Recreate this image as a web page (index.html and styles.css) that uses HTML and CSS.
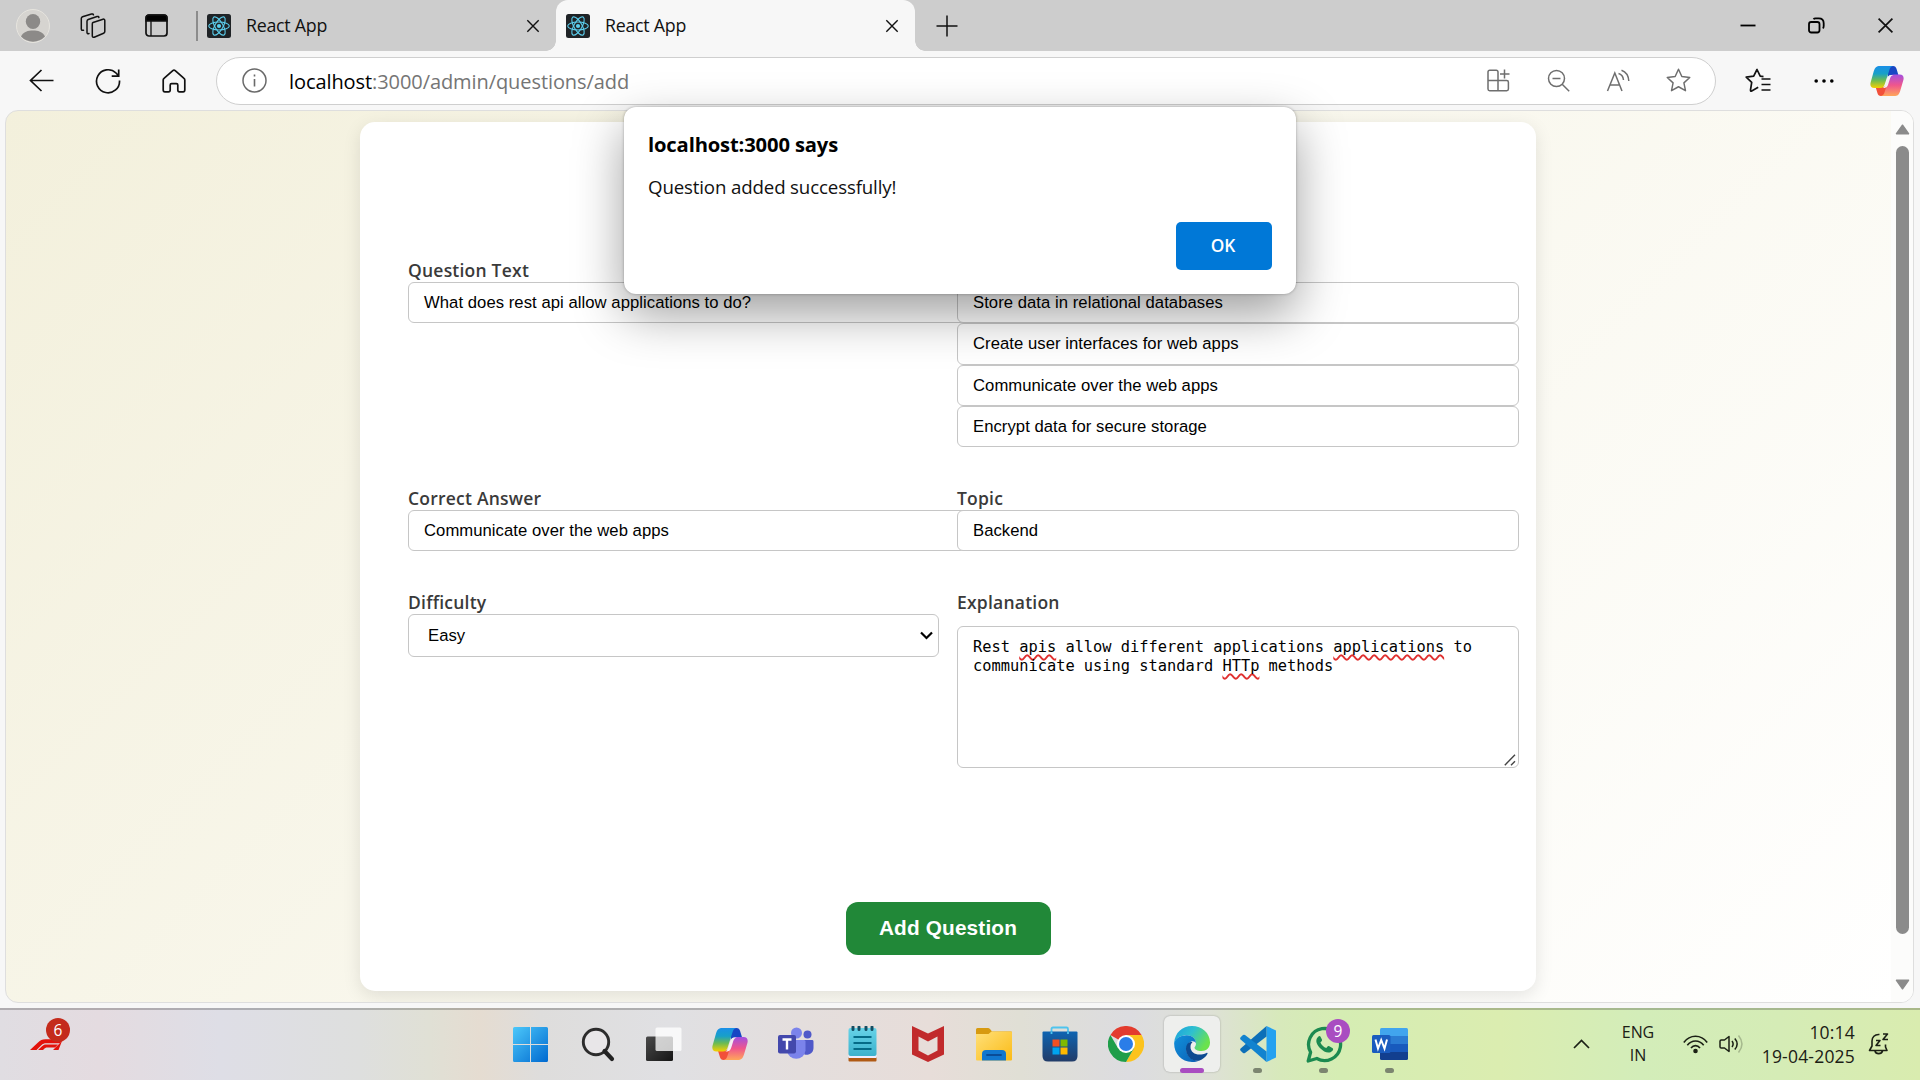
FILE: index.html
```html
<!DOCTYPE html>
<html lang="en">
<head>
<meta charset="utf-8">
<title>React App</title>
<link rel="stylesheet" href="styles.css">
</head>
<body>
<svg class="defs" width="0" height="0" aria-hidden="true">
  <defs>
    <linearGradient id="cpA" x1="0" y1="0" x2="0" y2="1"><stop offset="0" stop-color="#1a8fe8"/><stop offset=".35" stop-color="#18a0c8"/><stop offset=".65" stop-color="#6cbb52"/><stop offset="1" stop-color="#f7d000"/></linearGradient>
    <linearGradient id="cpB" x1="0" y1="0" x2="0" y2="1"><stop offset="0" stop-color="#a34fe0"/><stop offset=".5" stop-color="#f0568c"/><stop offset="1" stop-color="#ffa75a"/></linearGradient>
    <linearGradient id="win" x1="0" y1="0" x2="1" y2="1"><stop offset="0" stop-color="#4cc8fa"/><stop offset="1" stop-color="#0069d0"/></linearGradient>
    <linearGradient id="fold" x1="0" y1="0" x2="1" y2="1"><stop offset="0" stop-color="#ffe07a"/><stop offset="1" stop-color="#fbbb16"/></linearGradient>
    <linearGradient id="store" x1="0" y1="0" x2="0" y2="1"><stop offset="0" stop-color="#0e64b2"/><stop offset="1" stop-color="#223c68"/></linearGradient>
    <linearGradient id="edgeTop" x1="0" y1="0" x2="1" y2=".5"><stop offset="0" stop-color="#1a9fe0"/><stop offset=".5" stop-color="#2fc0cf"/><stop offset="1" stop-color="#6ae24d"/></linearGradient>
    <linearGradient id="edgeLow" x1="0" y1="0" x2="1" y2="1"><stop offset="0" stop-color="#1191dc"/><stop offset="1" stop-color="#0b5fb4"/></linearGradient>
    <linearGradient id="note" x1="0" y1="0" x2="0" y2="1"><stop offset="0" stop-color="#67d3e8"/><stop offset="1" stop-color="#3cb2cd"/></linearGradient>
    <linearGradient id="task" x1="0" y1="0" x2="1" y2="1"><stop offset="0" stop-color="#4a4a4a"/><stop offset="1" stop-color="#151515"/></linearGradient>
    <symbol id="react" viewBox="0 0 24 24">
      <rect width="24" height="24" rx="2.5" fill="#1f2326"/>
      <g fill="none" stroke="#5ccfee" stroke-width="1.1"><ellipse cx="12" cy="12" rx="10.3" ry="4"/><ellipse cx="12" cy="12" rx="10.3" ry="4" transform="rotate(60 12 12)"/><ellipse cx="12" cy="12" rx="10.3" ry="4" transform="rotate(120 12 12)"/></g>
      <circle cx="12" cy="12" r="2.1" fill="#5ccfee"/>
    </symbol>
    <symbol id="copilot" viewBox="0 0 36 34">
      <path d="M19 1h5.500c2 0 3 1.200 3.600 3l2 6.500H23c-2.500 0-3.500 1-4.200 3z" fill="#1846c4"/>
      <path d="M17 33h-5.500c-2 0-3-1.200-3.600-3l-2-6.500H13c2.500 0 3.500-1 4.200-3z" fill="#f2503a"/>
      <path d="M10.500 1h14c-2.300.5-3.200 1.800-3.900 4l-4.800 15c-.9 2.900-2 4.500-5 4.500H4.500C1 24.500-.3 22 .6 18.500L4 6.500C5.200 2.700 6.700 1 10.500 1z" fill="url(#cpA)"/>
      <path d="M25.500 33h-14c2.300-.5 3.200-1.800 3.900-4l4.800-15c.9-2.900 2-4 5-4h6.300c3.500 0 4.800 2.500 3.900 6L32 27.500c-1.200 3.800-2.700 5.500-6.500 5.500z" fill="url(#cpB)"/>
      <path d="M22.500 10.500h2.300c-2 .5-2.800 1.500-3.500 3.500l-2 6.500c-.7 2.300-1.800 3.600-4 4h-2c1.800-.6 2.300-1.700 3-3.800l2.200-6.700c.7-2 1.500-3.500 4-3.500z" fill="#f4f0f2"/>
    </symbol>
    <symbol id="close" viewBox="0 0 16 16"><path d="M1.500 1.500l13 13M14.500 1.500l-13 13" fill="none" stroke="#111" stroke-width="1.600"/></symbol>
    <symbol id="star" viewBox="0 0 24 24"><path d="M12 1.200l3.200 7 7.600.9-5.600 5.200 1.500 7.500-6.700-3.800-6.700 3.800 1.500-7.500L1.200 9.100l7.600-.9z" fill="none" stroke="#6e6e6e" stroke-width="1.400" stroke-linejoin="round"/></symbol>
  </defs>
</svg>

<header class="tabstrip">
  <div class="slot profile"><svg width="34" height="34" viewBox="0 0 34 34"><circle cx="17" cy="17" r="16.500" fill="#d6d4d0" stroke="#e6e4de"/><ellipse cx="17" cy="12.500" rx="7.200" ry="7.500" fill="#8c8a88"/><path d="M5 27.500c2.500-5 7-6 12-6s9.500 1 12 6a16.500 16.500 0 0 1-24 0z" fill="#8c8a88"/></svg></div>
  <div class="slot workspaces"><svg width="26" height="26" viewBox="0 0 26 26" fill="none" stroke="#111" stroke-width="1.500" stroke-linejoin="round" stroke-linecap="round"><path d="M13 9.500L23 6.200c1-.3 1.800.2 1.800 1.200v11.100c0 .8-.4 1.400-1.200 1.700l-9.400 4c-1 .4-1.900 0-1.900-1.100V10.900c0-.8 0-1.100.7-1.400z"/><path d="M9 20.500c-1.200.5-2 0-2-1.100V8.200c0-.8.400-1.400 1.200-1.700L17 3.500c1-.3 1.700 0 1.900 1"/><path d="M3.500 17.200c-1.400.4-2.200 0-2.200-1.100V5.400c0-.8.400-1.400 1.200-1.700L11.500 1c1-.3 1.700 0 1.900.8"/></svg></div>
  <div class="slot tab-actions"><svg width="23" height="23" viewBox="0 0 23 23"><rect x="1" y="1" width="21" height="21" rx="3" fill="none" stroke="#111" stroke-width="1.700"/><path d="M1 7V4a3 3 0 0 1 3-3h15a3 3 0 0 1 3 3v3zM6 7v15" fill="#000" stroke="#111" stroke-width="1.300"/></svg></div>
  <div class="divider"></div>
  <div class="tab"><svg width="24" height="24"><use href="#react"/></svg><span class="tab-title">React App</span><svg class="tab-close" width="14" height="14"><use href="#close"/></svg></div>
  <div class="tab active"><svg width="24" height="24"><use href="#react"/></svg><span class="tab-title">React App</span><svg class="tab-close" width="14" height="14"><use href="#close"/></svg></div>
  <div class="slot new-tab"><svg width="22" height="22" viewBox="0 0 22 22"><path d="M11 .5v21M.5 11h21" stroke="#111" stroke-width="1.500"/></svg></div>
  <div class="window-controls">
    <div class="slot"><svg width="16" height="16" viewBox="0 0 16 16"><path d="M.5 7.500h15" stroke="#000" stroke-width="1.800"/></svg></div>
    <div class="slot"><svg width="17" height="17" viewBox="0 0 17 17" fill="none" stroke="#000" stroke-width="1.800"><rect x="1" y="5" width="10.500" height="10.500" rx="2.200"/><path d="M5.500 2.200C6 1.500 6.500 1.300 7.500 1.300h3.200c3 0 5 2 5 5V9c0 1-.2 1.800-1 2.200" /></svg></div>
    <div class="slot"><svg width="17" height="17"><use href="#close"/></svg></div>
  </div>
</header>

<nav class="toolbar">
  <div class="slot back"><svg width="25" height="23" viewBox="0 0 25 23" fill="none" stroke="#111" stroke-width="1.700"><path d="M24.500 11.500H1.500M12.500 1L1.500 11.500l11 10.500"/></svg></div>
  <div class="slot"><svg width="26" height="26" viewBox="0 0 26 26" fill="none" stroke="#111" stroke-width="1.700"><path d="M24.500 12.500A11.500 11.500 0 1 1 21 5l2.500 2.800M23.700 1.500v6.700h-7"/></svg></div>
  <div class="slot"><svg width="24" height="24" viewBox="0 0 24 24" fill="none" stroke="#111" stroke-width="1.700" stroke-linejoin="round"><path d="M10.800 1.700L2 9.400c-.6.500-.8 1-.8 1.700v10c0 1 .7 1.700 1.700 1.700h3.600c1 0 1.700-.7 1.700-1.700v-5c0-.9.500-1.400 1.400-1.400h4.800c.9 0 1.400.5 1.400 1.400v5c0 1 .7 1.700 1.700 1.700h3.600c1 0 1.700-.7 1.700-1.700v-10c0-.7-.2-1.200-.8-1.700l-8.800-7.700c-.8-.7-1.600-.7-2.400 0z"/></svg></div>
  <div class="address">
    <svg class="info" width="25" height="25" viewBox="0 0 25 25"><circle cx="12.500" cy="12.500" r="11.500" fill="none" stroke="#6a6a6a" stroke-width="1.500"/><path d="M12.500 11v7.500M12.500 6.500v2" stroke="#6a6a6a" stroke-width="1.600"/></svg>
    <span class="url"><b>localhost</b>:3000/admin/questions/add</span>
    <div class="address-actions">
      <div class="slot"><svg width="23" height="23" viewBox="0 0 23 23" fill="none" stroke="#6e6e6e" stroke-width="1.500"><path d="M11 11.500V3c0-1-.7-1.700-1.700-1.700H2.700C1.700 1.300 1 2 1 3v17c0 1 .7 1.700 1.700 1.700h17c1 0 1.700-.7 1.700-1.700v-6.800c0-1-.7-1.700-1.700-1.700H1M11 11.500v10M17.500.5v9M13 5h9.500"/></svg></div>
      <div class="slot"><svg width="23" height="23" viewBox="0 0 23 23" fill="none" stroke="#6e6e6e" stroke-width="1.500"><circle cx="9.500" cy="9.500" r="8"/><path d="M15.200 15.200l7 7M5.500 9.500h8"/></svg></div>
      <div class="slot"><svg width="24" height="24" viewBox="0 0 24 24" fill="none" stroke="#6e6e6e" stroke-width="1.500"><path d="M1.500 22L8.800 4l7.200 18M4 16h9.500M12.500 4.500c3 .7 4.700 3 5 6.500M15.500 1.200c4.500 1.600 7 5.300 7.300 10.800"/></svg></div>
      <div class="slot"><svg width="25" height="25"><use href="#star"/></svg></div>
    </div>
  </div>
  <div class="toolbar-right">
    <div class="slot"><svg width="26" height="25" viewBox="0 0 26 25" fill="none" stroke="#111" stroke-width="1.700" stroke-linejoin="round"><path d="M18.500 8.700l-3.300-.5L12 1.500 8.700 8.200 1.200 9.200l5.500 5.200L5.500 22c-.1 1 .3 1.300 1.200.9l6.500-3.600M16.500 11h9M16.500 16.500h9M16.500 22h9"/></svg></div>
    <div class="slot"><svg width="20" height="6" viewBox="0 0 20 6"><circle cx="2.200" cy="3" r="1.800"/><circle cx="10" cy="3" r="1.800"/><circle cx="17.800" cy="3" r="1.800"/></svg></div>
    <div class="slot copilot"><svg width="34" height="32"><use href="#copilot"/></svg></div>
  </div>
</nav>

<div class="frame">
  <main class="page">
    <form class="card">
      <div class="field">
        <label>Question Text</label>
        <div class="input">What does rest api allow applications to do?</div>
      </div>
      <div class="field options">
        <div class="input">Store data in relational databases</div>
        <div class="input">Create user interfaces for web apps</div>
        <div class="input">Communicate over the web apps</div>
        <div class="input">Encrypt data for secure storage</div>
      </div>
      <div class="field">
        <label>Correct Answer</label>
        <div class="input">Communicate over the web apps</div>
      </div>
      <div class="field">
        <label>Topic</label>
        <div class="input">Backend</div>
      </div>
      <div class="field">
        <label>Difficulty</label>
        <div class="input select">Easy<svg width="13" height="9" viewBox="0 0 13 9"><path d="M1 1.500l5.500 5.500L12 1.500" fill="none" stroke="#000" stroke-width="2.200"/></svg></div>
      </div>
      <div class="field">
        <label>Explanation</label>
        <div class="textarea"><p>Rest <u>apis</u> allow different applications <u>applications</u> to<br>communicate using standard <u>HTTp</u> methods</p><svg width="12" height="12" viewBox="0 0 12 12"><path d="M.8 11.200L11 .8M7 11.200l4-4" stroke="#444" stroke-width="1.400"/></svg></div>
      </div>
      <button class="submit" type="button">Add Question</button>
    </form>
    <div class="scrollbar">
      <svg width="15" height="11" viewBox="0 0 15 11"><path d="M7.500 1.200L13.500 9.800h-12z" fill="#8b8b8b" stroke="#8b8b8b" stroke-width="1.500" stroke-linejoin="round"/></svg>
      <div class="thumb"></div>
      <svg width="15" height="11" viewBox="0 0 15 11"><path d="M7.500 9.800L13.500 1.200h-12z" fill="#8b8b8b" stroke="#8b8b8b" stroke-width="1.500" stroke-linejoin="round"/></svg>
    </div>
  </main>
</div>

<section class="dialog">
  <h1>localhost:3000 says</h1>
  <p>Question added successfully!</p>
  <button type="button">OK</button>
</section>

<footer class="taskbar">
  <div class="widget">
    <svg width="34" height="11" viewBox="0 0 34 11"><path d="M0 11L8 3.500C10.500 1 12 .2 15.500.2H34L30 4.300H16.500c-2.500 0-3.500.4-5.200 2L6.500 11z" fill="#e3120b"/><path d="M8 11l4-3.700c1.500-1.500 2.500-1.800 4.500-1.800h11.500l-3 2.900h-8c-1 0-1.500.2-2.200.9L13 11zM23 11l9-9h0L28.500 11z" fill="#e3120b"/></svg>
    <span class="badge red">6</span>
  </div>
  <div class="apps">
    <div class="app start"><svg width="35" height="35" viewBox="0 0 35 35"><path d="M1.500 0H17v17H0V1.500Q0 0 1.500 0zM18 0h15.500Q35 0 35 1.500V17H18zM0 18h17v17H1.500Q0 35 0 33.500zM18 18h17v15.500q0 1.500-1.500 1.500H18z" fill="url(#win)"/></svg></div>
    <div class="app"><svg width="34" height="35" viewBox="0 0 34 35"><circle cx="15" cy="15" r="12.700" fill="#e8e6e8" stroke="#2c2c2c" stroke-width="2.900"/><path d="M23.500 24l7.500 8" stroke="#222" stroke-width="4.200" stroke-linecap="round"/></svg></div>
    <div class="app"><svg width="36" height="35" viewBox="0 0 36 35"><rect y="9.500" width="27" height="24.500" rx="1.500" fill="url(#task)"/><rect x="9.500" y=".5" width="26" height="23.500" rx="1.500" fill="#fff" opacity=".77"/></svg></div>
    <div class="app"><svg width="36" height="34"><use href="#copilot"/></svg></div>
    <div class="app"><svg width="36" height="34" viewBox="0 0 36 34"><circle cx="18.500" cy="6" r="5.500" fill="#7b83eb"/><circle cx="29.500" cy="7.500" r="4" fill="#5059c9"/><path d="M21 13h13.500q1 0 1 1.500v6.500a6.800 6.800 0 0 1-9 6.500z" fill="#5059c9"/><path d="M10 13h16q1.500 0 1.500 1.500v9a9.300 9.300 0 0 1-18.500 0z" fill="#7b83eb"/><rect y="8" width="18" height="18.500" rx="2" fill="#4348ac"/><path d="M4.500 12.500h9M9 12.500v10" stroke="#fff" stroke-width="2.400"/></svg></div>
    <div class="app"><svg width="29" height="36" viewBox="0 0 29 36"><path d="M.5 31h28v3.500q0 1-1 1h-26q-1 0-1-1z" fill="#b05a14"/><path d="M.5 29h28v3H.5z" fill="#eef"/><rect x=".5" y="2" width="28" height="28" rx="2" fill="url(#note)"/><path d="M5.500 11h18M5.500 17h18M5.500 23h18" stroke="#056b87" stroke-width="1.800"/><path d="M5 1v2.500M11 1v2.500M18 1v2.500M24 1v2.500" stroke="#144e63" stroke-width="3" stroke-linecap="round"/></svg></div>
    <div class="app"><svg width="32" height="36" viewBox="0 0 32 36"><path d="M0 0l16 7.500L32 0v28.500L16 36 0 28.500zM6.500 10.500v14L16 29.500l9.500-5v-14L16 15.500z" fill="#c12a2c" fill-rule="evenodd"/></svg></div>
    <div class="app"><svg width="36" height="34" viewBox="0 0 36 34"><path d="M0 2.500Q0 1 1.500 1H12q1 0 2 1l2 2.500h19q1 0 1 1V12H0z" fill="#d79a10"/><path d="M0 7h12.500l3-2.500H35q1 0 1 1V32.500q0 1-1 1H1q-1 0-1-1z" fill="url(#fold)"/><path d="M6 33.500V27q0-4 4-4h16q4 0 4 4v6.500z" fill="#1177cf"/><path d="M11 28h14" stroke="#0a4c97" stroke-width="1.800" stroke-linecap="round"/></svg></div>
    <div class="app"><svg width="36" height="36" viewBox="0 0 36 36"><path d="M9.500 7V3q0-1.500 1.500-1.500h13.500Q26 1.500 26 3v4" fill="none" stroke="#4fc4ee" stroke-width="1.800"/><path d="M.5 6.500q0-1 1-1h33q1 0 1 1V30q0 5.500-5.500 5.500H6Q.5 35.500.5 30z" fill="url(#store)"/><path d="M9.500 5.500V8M26 5.500V8" stroke="#4fc4ee" stroke-width="1.800"/><path d="M10.500 13.500h7v7h-7z" fill="#f25022"/><path d="M18.500 13.500h7v7h-7z" fill="#7fba00"/><path d="M10.500 21.500h7v7h-7z" fill="#00a4ef"/><path d="M18.500 21.500h7v7h-7z" fill="#ffb900"/></svg></div>
    <div class="app"><svg width="36" height="36" viewBox="0 0 36 36"><path d="M18 18L2.400 9A18 18 0 0 1 33.600 9z" fill="#e33b2e"/><path d="M18 18V9h15.600A18 18 0 0 1 18 36l7.800-13.500z" fill="#fcc31e"/><path d="M18 18l7.800 4.500L18 36A18 18 0 0 1 2.400 9l7.800 13.500z" fill="#1f9e4a"/><circle cx="18" cy="18" r="9" fill="#fff"/><circle cx="18" cy="18" r="7" fill="#2a7de8"/></svg></div>
    <div class="app current"><svg width="36" height="36" viewBox="0 0 36 36"><path d="M18 0C8 0 1 7 .2 16.500 3 11 8 9 13 9.200c5.500.2 9 4 9 8.300 0 2-1 3-1.500 4 0 2 3 3.500 7 3.500 5 0 8.500-3.500 8.500-8.500C36 7 28 0 18 0z" fill="url(#edgeTop)"/><path d="M.2 16.500C-.5 27 7 36 18 36c3 0 5-.5 7-1.300-8 0-12.500-5.700-12.500-10.700 0-4 2-7.500 5-8.500 2-.5 4 .5 4.500 2 0-4.500-3.500-8.300-9-8.300C7 9 2 12 .2 16.500z" fill="url(#edgeLow)"/><path d="M13.500 17.700C9 24.500 15 36.300 25 34.700c4-1.400 7-4 8.500-7 .3-.8-.3-1.200-1-.8-8 4-16 .6-16-5.900 0-2 .5-3.500 2-5-2-.2-3.800.5-5 1.700z" fill="#0d4a91"/></svg><i></i></div>
    <div class="app running"><svg width="36" height="36" viewBox="0 0 36 36"><path d="M26.500 0L36 4.500v27L26.500 36z" fill="#24a1f0"/><path d="M26.500 0v10.500L5 27q-1 .7-2 0L.6 24.800q-1-1.300 0-2.300z" fill="#0d6fb8"/><path d="M26.500 36V25.500L5 9Q4 8.300 3 9L.6 11.200q-1 1.300 0 2.300z" fill="#1283cf"/></svg><i></i></div>
    <div class="app running"><svg width="37" height="37" viewBox="0 0 37 37"><path d="M2.200 35L4.600 26.300A16 16 0 1 1 10.800 32.500z" fill="none" stroke="#1c8a50" stroke-width="3.300" stroke-linejoin="round"/><path d="M12 11c-3.500 3.500-1 8 2.500 11.500s8.500 6 12 2.200c1-1.200.8-2-.2-2.700l-3-1.700c-.8-.4-1.400-.2-2 .5l-1 1.200c-2.500-.8-5-3.300-5.900-5.600l1.200-1.200c.5-.6.600-1.200.2-2l-1.400-2.700c-.6-1-1.400-.6-2.400.5z" fill="#1c8a50"/></svg><span class="badge purple">9</span><i></i></div>
    <div class="app running"><svg width="36" height="34" viewBox="0 0 36 34"><path d="M8 2.500Q8 1 9.500 1h25Q36 1 36 2.500V9H8z" fill="#41a5ee"/><path d="M8 9h28v8H8z" fill="#2b7cd3"/><path d="M8 17h28v8H8z" fill="#185abd"/><path d="M8 25h28v6.500q0 1.500-1.500 1.500h-25Q8 33 8 31.500z" fill="#123f8f"/><rect y="8" width="18.500" height="18" rx="1.500" fill="#1a5cbf"/><path d="M3.500 12.500l2.500 9 3.200-8.500 3.300 8.500 2.500-9" fill="none" stroke="#fff" stroke-width="2"/></svg><i></i></div>
  </div>
  <div class="tray">
    <svg class="more" width="17" height="10" viewBox="0 0 17 10"><path d="M1 9l7.500-7.500L16 9" fill="none" stroke="#1b2015" stroke-width="1.700"/></svg>
    <div class="lang">ENG<br>IN</div>
    <svg class="wifi" width="25" height="19" viewBox="0 0 25 19" fill="none" stroke="#1b2015" stroke-width="1.600"><path d="M.8 7.500C7-.8 18-.8 24.200 7.500M4.300 10.200c4.500-5.700 11.900-5.700 16.400 0M8 13c2.500-3.200 6.500-3.200 9 0"/><circle cx="12.500" cy="16" r="1.500" fill="#1b2015"/></svg>
    <svg class="volume" width="25" height="20" viewBox="0 0 25 20" fill="none" stroke="#1b2015" stroke-width="1.500"><path d="M10 2.500v15L5.500 14H2.300Q1 14 1 12.700V7.300Q1 6 2.300 6h3.200z" stroke-linejoin="round"/><path d="M13 7c1.500 2 1.500 4 0 6M15.800 4.500c3 3.500 3 7.500 0 11"/><path d="M19.500 1.500c4.500 5.500 4.500 11.500 0 17" opacity=".25"/></svg>
    <div class="clock">10:14<br>19-04-2025</div>
    <svg class="bell" width="22" height="22" viewBox="0 0 22 22" fill="none" stroke="#1b2015" stroke-width="1.600" stroke-linejoin="round"><path d="M11.500 1.500C6.500 1 4 4.500 4 8v5l-2.500 4.500h17.500L17.500 14v-2.500M7 18c.8 3.500 6.500 3.500 7.500 0M8 7.500h4l-4 5h4.500M15 1h4.500L15 6.500h5"/></svg>
  </div>
</footer>
</body>
</html>
```
FILE: styles.css
```css
* { box-sizing: border-box; }

body {
  margin: 0;
  width: 1920px;
  height: 1080px;
  overflow: hidden;
  position: relative;
  display: flex;
  flex-direction: column;
  background: #f7f7f7;
  font-family: "Open Sans", "Noto Sans", sans-serif;
  color: #111;
}

svg { display: block; flex: none; }
.defs { position: absolute; }

.slot { display: flex; align-items: center; justify-content: center; flex: none; }

/* Tab strip */
.tabstrip { height: 51px; flex: none; display: flex; align-items: center; background: #cdcdcd; }
.profile { width: 66px; }
.workspaces { width: 54px; }
.tab-actions { width: 72px; }
.divider { width: 2px; height: 30px; margin: 0 2px 0 4px; background: #8c8c8c; }
.tab { width: 356px; height: 51px; padding: 0 16px 0 7px; display: flex; align-items: center; }
.tab-title { flex: 1; margin-left: 15px; padding-bottom: 1px; font-size: 17.800px; letter-spacing: -0.250px; line-height: 24px; }
.tab.active {
  position: relative;
  width: 359px;
  padding: 0 16px 0 10px;
  background: #f7f7f7;
  border-radius: 12px 12px 0 0;
}
.tab.active::before,
.tab.active::after {
  content: "";
  position: absolute;
  bottom: 0;
  width: 10px;
  height: 10px;
}
.tab.active::before { left: -10px; background: radial-gradient(circle at 0 0, #cdcdcd 9.500px, #f7f7f7 10px); }
.tab.active::after { right: -10px; background: radial-gradient(circle at 100% 0, #cdcdcd 9.500px, #f7f7f7 10px); }
.new-tab { width: 64px; }
.window-controls { display: flex; margin-left: auto; }
.window-controls .slot { width: 69px; }

/* Toolbar */
.toolbar { height: 59px; flex: none; display: flex; align-items: center; padding-left: 8px; }
.toolbar > .slot { width: 66px; }
.toolbar > .back { margin-right: 1px; }
.address {
  width: 1500px;
  height: 48px;
  margin-left: 9px;
  padding: 0 7px 0 25px;
  display: flex;
  align-items: center;
  background: #fff;
  border: 1.500px solid #cfcfcf;
  border-radius: 24px;
}
.url { margin-left: 22px; padding-top: 2px; font-size: 20px; letter-spacing: -0.080px; line-height: 28px; color: #757575; }
.url b { font-weight: 400; color: #000; }
.address-actions { display: flex; margin-left: auto; }
.address-actions .slot { width: 60px; }
.toolbar-right { display: flex; margin-left: 9px; }
.toolbar-right .slot { width: 66px; }
.toolbar-right .copilot { width: 60px; }

/* Page */
.frame { height: 898px; flex: none; padding: 0 6px 5px 5px; }
.page {
  height: 893px;
  padding-left: 354px;
  display: flex;
  justify-content: space-between;
  border: 1px solid #dedede;
  border-radius: 13px;
  overflow: hidden;
  background: linear-gradient(135deg, #f3f0dc 0%, #ffffff 100%);
}
.card {
  width: 1176px;
  height: 869px;
  margin-top: 11px;
  padding: 135px 48px 0;
  display: grid;
  grid-template-columns: 531px 531px;
  grid-template-rows: 190px 66px 179px 53px;
  column-gap: 18px;
  row-gap: 38px;
  background: #fff;
  border-radius: 15px;
  box-shadow: 0 5px 18px rgba(0, 0, 0, 0.1);
}
.field label { display: block; height: 25px; line-height: 27px; font-size: 17.500px; font-weight: 600; letter-spacing: 0.220px; color: #3a3a3a; }
.options { padding-top: 25px; }
.input {
  width: 562px;
  height: 41.250px;
  padding: 0 15px;
  display: flex;
  align-items: center;
  background: #fff;
  border: 1px solid #c6c6c6;
  border-radius: 6px;
  font: 16.670px/19px "Liberation Sans", Arial, sans-serif;
  letter-spacing: 0.050px;
  color: #000;
}
.select { width: 531px; height: 43px; padding: 0 5px 1px 19px; justify-content: space-between; }
.textarea {
  width: 562px;
  height: 142px;
  margin-top: 12px;
  padding: 11px 5px 5px 15px;
  display: flex;
  flex-direction: column;
  justify-content: space-between;
  border: 1px solid #c6c6c6;
  border-radius: 6px;
  background: #fff;
}
.textarea p { margin: 0; font: 15.350px/19px "DejaVu Sans Mono", monospace; color: #000; white-space: nowrap; }
.textarea u { text-decoration: underline wavy #e03030 1.500px; text-underline-offset: 2px; text-decoration-skip-ink: none; }
.textarea svg { align-self: flex-end; margin: 0 -3px -4px 0; }
.submit {
  grid-column: 1 / 3;
  justify-self: center;
  width: 205px;
  height: 53px;
  margin-top: 96px;
  padding: 0 0 2px;
  border: 0;
  border-radius: 12px;
  background: #218838;
  color: #fff;
  font: bold 20.800px "Liberation Sans", Arial, sans-serif;
  letter-spacing: 0.150px;
}
.scrollbar { width: 22px; padding-top: 13px; display: flex; flex-direction: column; align-items: center; background: #fcfcfb; }
.thumb { width: 13px; height: 788px; flex: none; margin: 11px 0 45px; border-radius: 7px; background: #8b8b8b; }

/* Alert dialog floating over the page */
.dialog {
  position: absolute;
  left: 624px;
  top: 107px;
  width: 672px;
  height: 187px;
  padding: 22px 24px 24px;
  display: flex;
  flex-direction: column;
  background: #fff;
  border-radius: 12px;
  box-shadow: 0 0 3px rgba(0, 0, 0, 0.3), 0 20px 50px rgba(0, 0, 0, 0.38);
}
.dialog h1 { margin: 0; font-size: 20.200px; line-height: 30px; font-weight: 700; letter-spacing: -0.150px; color: #000; }
.dialog p { margin: 15px 0 0; font-size: 18.700px; line-height: 26px; letter-spacing: -0.150px; }
.dialog button {
  width: 96px;
  height: 48px;
  margin: auto 0 0 auto;
  padding: 0 2px 2px 0;
  border: 0;
  border-radius: 5px;
  background: #0078d7;
  color: #fff;
  font: 600 17.300px "Open Sans", sans-serif;
}

/* Taskbar */
.taskbar {
  height: 72px;
  flex: none;
  display: flex;
  align-items: center;
  padding-bottom: 2px;
  border-top: 2px solid rgba(0, 0, 0, 0.22);
  background: linear-gradient(90deg, #e0dde2 0, #e4dbe0 100px, #dedee6 220px, #dedfde 360px, #e0e0d5 430px, #e5dcd1 480px, #dedddc 540px, #e0e0e3 670px, #e4dedd 800px, #e7ddd9 930px, #e0dfd5 1020px, #dcdce0 1130px, #dee1d6 1210px, #d7e9bb 1280px, #d5edb3 1340px, #dbedb0 1500px, #d3edb9 1640px, #d5ecb6 1780px, #d9ecaf 1920px);
  color: #1b2015;
}
.widget { position: relative; width: 497px; height: 68px; padding: 29px 0 0 30px; }
.badge { position: absolute; display: flex; align-items: center; justify-content: center; width: 24px; height: 24px; border-radius: 50%; color: #fff; font-size: 15.500px; }
.badge.red { left: 46px; top: 8px; background: #c42b1c; }
.badge.purple { left: 35px; top: 9px; background: #a94dc1; }
.apps { display: flex; }
.app { position: relative; width: 66px; height: 68px; display: flex; align-items: center; justify-content: center; }
.app.start { margin-right: 2px; }
.app i { position: absolute; left: 28px; bottom: 5px; width: 9px; height: 5px; border-radius: 3px; background: #7c8570; }
.app.current { width: 56px; height: 56px; margin: 6px 5px; border-radius: 6px; background: #eeefed; box-shadow: 0 0 2px rgba(0, 0, 0, 0.3); }
.app.current i { left: 16px; bottom: -1px; width: 24px; background: #a94dc1; }
.tray { flex: 1; display: flex; align-items: center; padding-left: 150px; }
.lang { width: 60px; margin-left: 18px; text-align: center; font-size: 16px; line-height: 23px; letter-spacing: -0.100px; padding-bottom: 1px; }
.wifi { margin-left: 15px; }
.volume { margin-left: 11px; }
.clock { width: 111px; padding-bottom: 1px; text-align: right; font-size: 17.500px; line-height: 24px; letter-spacing: 0.200px; white-space: nowrap; }
.bell { margin-left: 13px; }
```
